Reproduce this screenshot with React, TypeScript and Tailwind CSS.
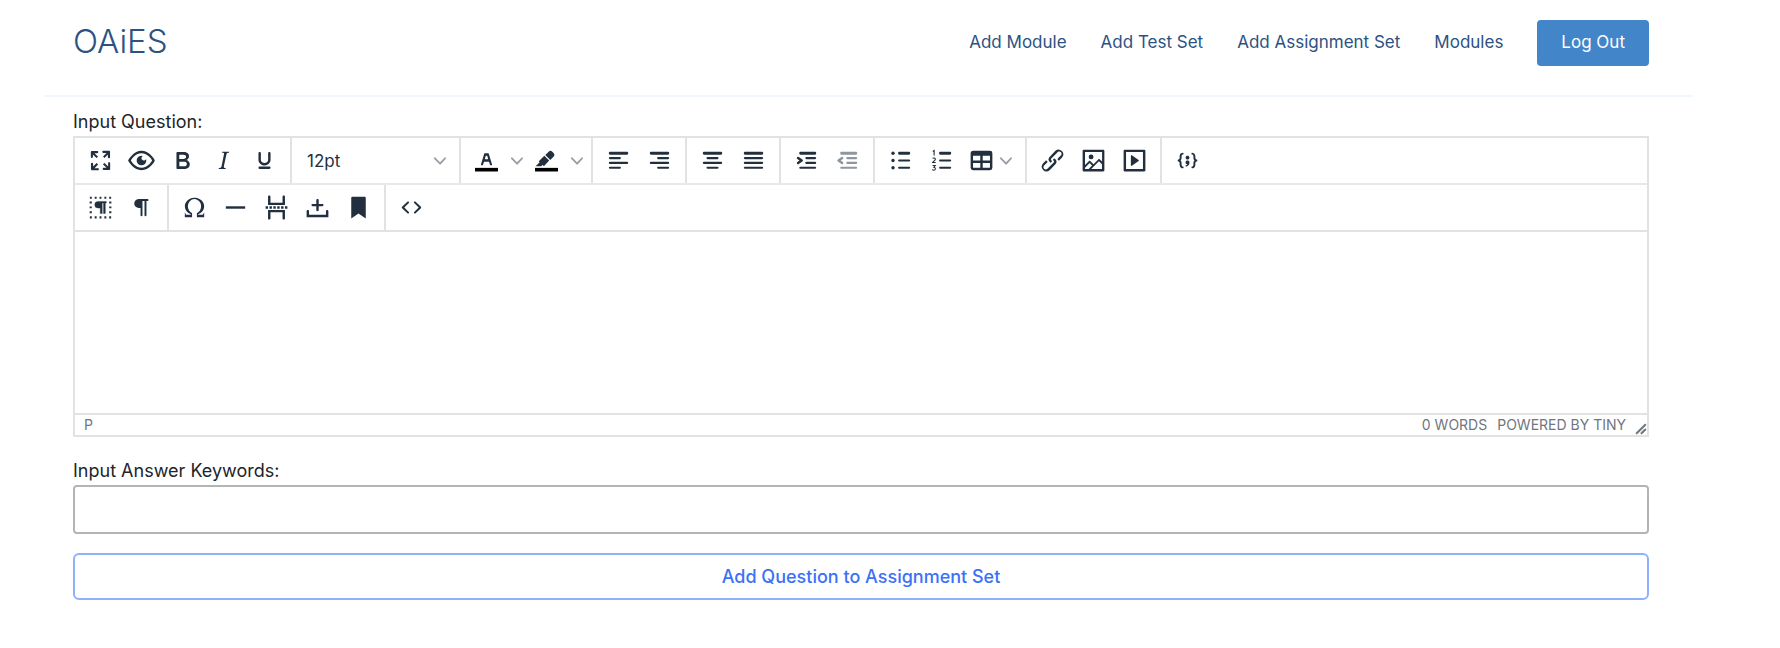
import React from "react";

const ICONS: Record<string, string> = {
  fullscreen:
    "M15.3 10l-1.2-1.3 2.9-3h-2.3a.9.9 0 110-1.7H19c.5 0 .9.4.9.9v4.4a.9.9 0 11-1.8 0V7l-2.8 3zm0 4l3 3v-2.3a.9.9 0 111.7 0V19c0 .5-.4.9-.9.9h-4.4a.9.9 0 110-1.8H17l-3-2.9 1.3-1.2zM10 15.4l-2.9 3h2.3a.9.9 0 110 1.7H5a.9.9 0 01-.9-.9v-4.4a.9.9 0 111.8 0V17l2.9-3 1.2 1.4zM8.7 10L5.7 7v2.3a.9.9 0 01-1.7 0V5c0-.5.4-.9.9-.9h4.4a.9.9 0 010 1.8H7l3 2.9-1.3 1.2z",
  preview:
    "M3.5 12.5c.5.8 1.1 1.6 1.8 2.3 2 2 4.2 3.2 6.7 3.2s4.7-1.2 6.7-3.2a16.2 16.2 0 002.1-2.8 15.7 15.7 0 00-2.1-2.8c-2-2-4.2-3.2-6.7-3.2a9.3 9.3 0 00-6.7 3.2A16.2 16.2 0 003.2 12c0 .2.2.3.3.5zm-2.4-1l.7-1.2L4 7.8C6.2 5.4 8.9 4 12 4c3 0 5.8 1.4 8.1 3.8a18.2 18.2 0 012.8 3.7v1l-.7 1.2a18.1 18.1 0 01-2.1 2.5c-2.3 2.4-5 3.8-8.1 3.8-3 0-5.8-1.4-8.1-3.8a18.2 18.2 0 01-2.8-3.7 1 1 0 010-1zm12-3.3a2 2 0 102.7 2.6 4 4 0 11-2.6-2.6z",
  bold: "M7.8 19c-.3 0-.5 0-.6-.2l-.2-.5V5.7c0-.2 0-.4.2-.5l.6-.2h5c1.5 0 2.7.3 3.5 1 .7.6 1.1 1.4 1.1 2.5a3 3 0 01-.6 1.9c-.4.6-1 1-1.6 1.2.4.1.9.3 1.3.6s.8.7 1 1.2c.4.4.5 1 .5 1.6 0 1.3-.4 2.3-1.3 3-.8.7-2.1 1-3.8 1H7.8zm5-8.3c.6 0 1.2-.1 1.6-.5.4-.3.6-.7.6-1.3 0-1.1-.8-1.7-2.3-1.7H9.3v3.5h3.4zm.5 6c.7 0 1.3-.1 1.7-.4.4-.4.6-.9.6-1.5s-.2-1-.7-1.4c-.4-.3-1-.4-2-.4H9.4v3.8h4z",
  italic:
    "M16.7 4.7l-.1.9h-.3c-.6 0-1 0-1.4.3-.3.3-.4.6-.5 1.1l-2.1 9.8v.6c0 .5.4.8 1.4.8h.2l-.2.8H8l.2-.8h.2c1.1 0 1.8-.5 2-1.5l2-9.8.1-.5c0-.6-.4-.8-1.4-.8h-.3l.2-.9h5.8z",
  underline:
    "M16 5c.6 0 1 .4 1 1v5.5a4 4 0 01-.4 1.8l-1 1.4a5.3 5.3 0 01-5.5 1 5 5 0 01-1.6-1c-.5-.4-.8-.9-1.1-1.4a4 4 0 01-.4-1.8V6c0-.6.4-1 1-1s1 .4 1 1v5.5c0 .3 0 .6.2 1l.6.7a3.3 3.3 0 002.2.8 3.4 3.4 0 002.2-.8c.3-.2.4-.5.6-.8l.2-.9V6c0-.6.4-1 1-1zM8 17h8c.6 0 1 .4 1 1s-.4 1-1 1H8a1 1 0 010-2z",
  link: "M6.2 12.3a1 1 0 011.4 1.4l-2.1 2a2 2 0 102.7 2.8l4.8-4.8a1 1 0 000-1.4 1 1 0 111.4-1.3 2.9 2.9 0 010 4L9.6 20a3.9 3.9 0 01-5.5-5.5l2-2zm11.6-.6a1 1 0 01-1.4-1.4l2-2a2 2 0 10-2.6-2.8L11 10.3a1 1 0 000 1.4A1 1 0 119.6 13a2.9 2.9 0 010-4L14.4 4a3.9 3.9 0 015.5 5.5l-2 2z",
  image:
    "M5 15.7l3.3-3.2c.3-.3.7-.3 1 0L12 15l4.1-4c.3-.4.8-.4 1 0l2 1.9V5H5v10.7zM5 18V19h3l2.8-2.9-2-2L5 17.9zm14-3l-2.5-2.4-6.4 6.5H19v-4zM4 3h16c.6 0 1 .4 1 1v16c0 .6-.4 1-1 1H4a1 1 0 01-1-1V4c0-.6.4-1 1-1zm6 8a2 2 0 100-4 2 2 0 000 4z",
  media:
    "M4 3h16c.6 0 1 .4 1 1v16c0 .6-.4 1-1 1H4a1 1 0 01-1-1V4c0-.6.4-1 1-1zm1 2v14h14V5H5zm4.8 2.6l5.6 4a.5.5 0 010 .8l-5.6 4A.5.5 0 019 16V8a.5.5 0 01.8-.4z",
  table:
    "M19 4a2 2 0 012 2v12a2 2 0 01-2 2H5a2 2 0 01-2-2V6c0-1.1.9-2 2-2h14zM5 14v4h6v-4H5zm14 0h-6v4h6v-4zm0-6h-6v4h6V8zM5 12h6V8H5v4z",
  codeSample:
    "M7.1 10a2.8 2.8 0 01-.8 2 2.8 2.8 0 01.8 2v1.7c0 .3.1.6.4.8.2.3.5.4.8.4.3 0 .4.2.4.4v.8c0 .2-.1.4-.4.4-.7 0-1.4-.3-2-.8-.5-.6-.8-1.3-.8-2V14c0-.3-.1-.6-.4-.8-.2-.3-.5-.4-.8-.4a.4.4 0 01-.4-.4v-.8c0-.2.2-.4.4-.4.3 0 .6-.1.8-.4.3-.2.4-.5.4-.8V8.3c0-.7.3-1.4.8-2 .6-.5 1.3-.8 2-.8.3 0 .4.2.4.4v.8c0 .2-.1.4-.4.4-.3 0-.6.1-.8.4-.3.2-.4.5-.4.8V10zm9.8 0V8.3c0-.3-.1-.6-.4-.8-.2-.3-.5-.4-.8-.4a.4.4 0 01-.4-.4V6c0-.2.1-.4.4-.4.7 0 1.4.3 2 .8.5.6.8 1.3.8 2V10c0 .3.1.6.4.8.2.3.5.4.8.4.2 0 .4.2.4.4v.8c0 .2-.2.4-.4.4-.3 0-.6.1-.8.4-.3.2-.4.5-.4.8v1.7c0 .7-.3 1.4-.8 2-.6.5-1.3.8-2 .8a.4.4 0 01-.4-.4v-.8c0-.2.1-.4.4-.4.3 0 .6-.1.8-.4.3-.2.4-.5.4-.8V14a2.8 2.8 0 01.8-2 2.8 2.8 0 01-.8-2zm-3.3-.4c0 .4-.1.8-.5 1.1-.3.3-.7.5-1.1.5-.4 0-.8-.2-1.1-.5-.4-.3-.5-.7-.5-1.1 0-.5.1-.9.5-1.2.3-.3.7-.4 1.1-.4.4 0 .8.1 1.1.4.4.3.5.7.5 1.2zM12 12c.4 0 .8.1 1.1.5.4.3.5.7.5 1.1 0 1-.1 1.6-.5 2a3 3 0 01-1.1 1c-.4.3-.8.4-1.1.4a.5.5 0 01-.5-.5V16a3 3 0 001-.2l.6-.6c-.6 0-1-.2-1.3-.5-.2-.3-.3-.7-.3-1 0-.5.1-1 .5-1.2.3-.4.7-.5 1.1-.5z",
  sourceCode:
    "M9.8 15.7c.3.3.3.8 0 1-.3.4-.9.4-1.2 0l-4.4-4.1a.8.8 0 010-1.2l4.4-4.2c.3-.3.9-.3 1.2 0 .3.3.3.8 0 1.1L6 12l3.8 3.7zM14.2 15.7c-.3.3-.3.8 0 1 .4.4.9.4 1.2 0l4.4-4.1c.3-.3.3-.9 0-1.2l-4.4-4.2a.8.8 0 00-1.2 0c-.3.3-.3.8 0 1.1L18 12l-3.8 3.7z",
  omega:
    "M15 18h4l1-2v4h-6v-3.3l1.4-1a6 6 0 001.8-2.9 6.3 6.3 0 00-.1-4.1 5.8 5.8 0 00-3-3.2c-.6-.3-1.3-.5-2.1-.5a5.1 5.1 0 00-3.9 1.8 6.3 6.3 0 00-1.3 6 6.2 6.2 0 001.8 3l1.4.9V20H4v-4l1 2h4v-.5l-2-1L5.4 15A6.5 6.5 0 014 11c0-1 .2-1.9.6-2.7A7 7 0 017.8 5C9.2 4.3 10.5 4 12 4c1.5 0 2.8.3 4.1 1 1.4.7 2.5 1.8 3.3 3.2.4.9.6 1.8.6 2.8a6.3 6.3 0 01-1.4 4l-1.6 1.5-2 1v.5z",
  rule: "M4 11h16v2H4z",
  pageBreak:
    "M3 11h2v2H3zM6.2 11h2v2h-2zM9.4 11h2v2h-2zM12.6 11h2v2h-2zM15.8 11h2v2h-2zM19 11h2v2h-2zM7 3v5h10V3c0-.6.4-1 1-1s1 .4 1 1v7H5V3c0-.6.4-1 1-1s1 .4 1 1zM6 22a1 1 0 01-1-1v-7h14v7c0 .6-.4 1-1 1a1 1 0 01-1-1v-5H7v5c0 .6-.4 1-1 1z",
  nonBreaking:
    "M11 11H8a1 1 0 110-2h3V6c0-.6.4-1 1-1s1 .4 1 1v3h3c.6 0 1 .4 1 1s-.4 1-1 1h-3v3c0 .6-.4 1-1 1a1 1 0 01-1-1v-3zm10 4v5H3v-5c0-.6.4-1 1-1s1 .4 1 1v3h14v-3c0-.6.4-1 1-1s1 .4 1 1z",
  bookmark: "M6 4v17l6-4 6 4V4c0-.6-.4-1-1-1H7a1 1 0 00-1 1z",
  pilcrow:
    "M9.5 5H17a.8.8 0 010 1.6h-.9V18.4a.8.8 0 01-1.6 0V6.6h-1.7V18.4a.8.8 0 01-1.6 0V12.4H9.9A3.7 3.7 0 019.5 5z",
};

function Svg({ children }: { children: React.ReactNode }) {
  return (
    <svg viewBox="0 0 24 24" className="size-[29px] shrink-0" fill="currentColor" fillRule="evenodd" aria-hidden="true">
      {children}
    </svg>
  );
}

/* Rows of text lines: [x, y, width]; the first one is drawn heavier. */
function Lines({ rows }: { rows: number[][] }) {
  return (
    <>
      {rows.map(([x, y, w], i) => (
        <rect key={i} x={x} y={i === 0 ? y - 1.2 : y - 0.9} width={w} height={i === 0 ? 2.4 : 1.8} rx={0.9} />
      ))}
    </>
  );
}

const DRAWN: Record<string, React.ReactNode> = {
  alignLeft: <Lines rows={[[4, 6, 16], [4, 10, 10], [4, 14, 16], [4, 18, 10]]} />,
  alignRight: <Lines rows={[[4, 6, 16], [10, 10, 10], [4, 14, 16], [10, 18, 10]]} />,
  alignCenter: <Lines rows={[[4, 6, 16], [7, 10, 10], [4, 14, 16], [7, 18, 10]]} />,
  justify: <Lines rows={[[4, 6, 16], [4, 10, 16], [4, 14, 16], [4, 18, 16]]} />,
  indent: (
    <>
      <Lines rows={[[6, 6, 14], [11, 10, 9], [11, 14, 9], [6, 18, 14]]} />
      <path d="M4.4 13.2L6.2 12l-1.8-1.2a1 1 0 011.2-1.6l3 2a1 1 0 010 1.6l-3 2a1 1 0 11-1.2-1.6z" />
    </>
  ),
  outdent: (
    <>
      <Lines rows={[[6, 6, 14], [11, 10, 9], [11, 14, 9], [6, 18, 14]]} />
      <path d="M8.2 13.2a1 1 0 01-1.2 1.6l-3-2a1 1 0 010-1.6l3-2a1 1 0 011.2 1.6L6.4 12l1.8 1.2z" />
    </>
  ),
  bullets: (
    <>
      <Lines rows={[[10, 6, 10], [10, 12, 10], [10, 18, 10]]} />
      <circle cx="5.8" cy="6" r="1.4" />
      <circle cx="5.8" cy="12" r="1.4" />
      <circle cx="5.8" cy="18" r="1.4" />
    </>
  ),
  numbers: (
    <>
      <Lines rows={[[10, 6, 10], [10, 12, 10], [10, 18, 10]]} />
      <g fill="none" stroke="currentColor" strokeWidth="0.9">
        <path d="M4.8 4.6l1.1-.8v4" />
        <path d="M4.6 10.4c.4-.8 2.4-.7 2.3.5 0 .8-1.3 1.4-2.2 2.7h2.5" />
        <path d="M4.6 16.2h2.2l-1.1 1.4c1.7 0 1.6 2.5-.1 2.5-.6 0-1-.2-1.2-.6" />
      </g>
    </>
  ),
  textColor: (
    <>
      <path d="M2.5 18.1h19v3h-19z" fill="#000" />
      <path d="M8.7 16h-.8a.5.5 0 01-.5-.6l2.7-9c.1-.3.3-.4.5-.4h2.8c.2 0 .4.1.5.4l2.7 9a.5.5 0 01-.5.6h-.8a.5.5 0 01-.4-.4l-.7-2.2c0-.3-.3-.4-.5-.4h-3.4c-.2 0-.4.1-.5.4l-.7 2.2c0 .3-.2.4-.4.4zm2.6-7.6l-.6 2a.5.5 0 00.5.6h1.6a.5.5 0 00.5-.6l-.6-2c0-.3-.3-.4-.5-.4h-.4c-.2 0-.4.1-.5.4z" />
    </>
  ),
  highlight: (
    <>
      <path d="M2.5 18.1h19v3h-19z" fill="#000" />
      <path d="M7.7 16.7H3l3.3-3.3-.7-.8L10.2 8l4 4.1-4 4.2c-.2.2-.6.2-.8 0l-.6-.7-1.1 1.1zm5-7.5L11 7.4l3-2.9a2 2 0 012.6 0L18 6c.7.7.7 2 0 2.7l-2.9 2.9-1.8-1.8-.5-.6" />
    </>
  ),
  blocks: (
    <>
      <path d="M3.2 3.9H21M3.2 20.1H21" fill="none" stroke="currentColor" strokeWidth="1.8" strokeDasharray="1.6 2.4" />
      <path d="M3.9 7.1V18M20.1 7.1V18" fill="none" stroke="currentColor" strokeWidth="1.8" strokeDasharray="1.6 2.4" />
      <path d="M10 7h6.8v1.3h-.8V17h-1.5V8.3h-1.1V17h-1.6v-4.5H10A2.75 2.75 0 0110 7z" stroke="currentColor" strokeWidth="0.3" />
    </>
  ),
};

function Icon({ name }: { name: string }) {
  return <Svg>{DRAWN[name] ?? <path d={ICONS[name]} />}</Svg>;
}

function Chevron() {
  return (
    <svg viewBox="0 0 10 10" className="size-3 shrink-0 text-[#9a9ea6]" fill="currentColor" aria-hidden="true">
      <path d="M8.7 2.2c.3-.3.8-.3 1 0 .4.4.4.9 0 1.2L5.7 7.8c-.3.3-.9.3-1.2 0L.2 3.4a.8.8 0 010-1.2c.3-.3.8-.3 1.1 0L5 6l3.7-3.8z" />
    </svg>
  );
}

function Tool({ name, label, disabled }: { name: string; label: string; disabled?: boolean }) {
  return (
    <button
      type="button"
      aria-label={label}
      disabled={disabled}
      className="flex h-10 w-[41px] items-center justify-center disabled:opacity-50"
    >
      <Icon name={name} />
    </button>
  );
}

function SplitTool({ name, label }: { name: string; label: string }) {
  return (
    <div className="flex">
      <Tool name={name} label={label} />
      <button type="button" aria-label={`${label} options`} className="flex w-[19px] items-center justify-center">
        <Chevron />
      </button>
    </div>
  );
}

function Group({ children, last }: { children: React.ReactNode; last?: boolean }) {
  return (
    <div className={last ? "flex items-center px-[5px]" : "flex items-center border-r-2 border-[#e2e2e2] px-[5px]"}>
      {children}
    </div>
  );
}

const NAV = ["Add Module", "Add Test Set", "Add Assignment Set", "Modules"];

export default function App() {
  return (
    <div className="bg-white pr-[87px] pl-11 font-['Inter',sans-serif]">
      <header className="flex items-start justify-between border-b-2 border-[#f0f6fc] pt-5 pr-11 pb-[29px] pl-[29px] text-[#2c5282]">
        <a href="#" className="text-[33px] leading-[42px] font-light">
          OAiES
        </a>
        <nav className="flex items-center gap-[34px] text-[17px]">
          {NAV.map((item) => (
            <a key={item} href="#">
              {item}
            </a>
          ))}
          <button type="button" className="h-[46px] rounded bg-[#4285c8] px-6 text-white">
            Log Out
          </button>
        </nav>
      </header>

      <main className="flex flex-col pt-[11px] pr-11 pl-[29px] text-lg leading-7 text-[#212529]">
        <label htmlFor="question">Input Question:</label>
        <div className="border-2 border-[#e2e2e2] text-[#222f3e]">
          <div className="flex h-[47px] border-b-2 border-[#e8e8e8]">
            <Group>
              <Tool name="fullscreen" label="Fullscreen" />
              <Tool name="preview" label="Preview" />
              <Tool name="bold" label="Bold" />
              <Tool name="italic" label="Italic" />
              <Tool name="underline" label="Underline" />
            </Group>
            <Group>
              <div className="grid w-[157px] items-center">
                <select
                  aria-label="Font size"
                  defaultValue="12pt"
                  className="col-start-1 row-start-1 h-10 w-full appearance-none bg-transparent px-[10px] text-[17px]"
                >
                  <option>12pt</option>
                </select>
                <span className="pointer-events-none col-start-1 row-start-1 mr-2 justify-self-end">
                  <Chevron />
                </span>
              </div>
            </Group>
            <Group>
              <SplitTool name="textColor" label="Text color" />
              <SplitTool name="highlight" label="Highlight color" />
            </Group>
            <Group>
              <Tool name="alignLeft" label="Align left" />
              <Tool name="alignRight" label="Align right" />
            </Group>
            <Group>
              <Tool name="alignCenter" label="Align center" />
              <Tool name="justify" label="Justify" />
            </Group>
            <Group>
              <Tool name="indent" label="Increase indent" />
              <Tool name="outdent" label="Decrease indent" disabled />
            </Group>
            <Group>
              <Tool name="bullets" label="Bullet list" />
              <Tool name="numbers" label="Numbered list" />
              <button type="button" aria-label="Table" className="flex h-10 w-[58px] items-center gap-1 pl-[5px]">
                <Icon name="table" />
                <Chevron />
              </button>
            </Group>
            <Group>
              <Tool name="link" label="Insert link" />
              <Tool name="image" label="Insert image" />
              <Tool name="media" label="Insert media" />
            </Group>
            <Group last>
              <Tool name="codeSample" label="Code sample" />
            </Group>
          </div>
          <div className="flex h-[47px] border-b-2 border-[#e2e2e2]">
            <Group>
              <Tool name="blocks" label="Show blocks" />
              <Tool name="pilcrow" label="Show invisible characters" />
            </Group>
            <Group>
              <Tool name="omega" label="Special character" />
              <Tool name="rule" label="Horizontal line" />
              <Tool name="pageBreak" label="Page break" />
              <Tool name="nonBreaking" label="Nonbreaking space" />
              <Tool name="bookmark" label="Anchor" />
            </Group>
            <Group last>
              <Tool name="sourceCode" label="Source code" />
            </Group>
          </div>
          <textarea id="question" className="block h-[181px] w-full resize-none p-3 outline-none" />
          <div className="flex h-[22px] items-center border-t-2 border-[#e2e2e2] pl-[9px] text-sm text-[#6f767e]">
            <span className="flex-1">P</span>
            <span>0 WORDS</span>
            <a href="#" className="mr-[9px] ml-[10px]">
              POWERED BY TINY
            </a>
            <svg viewBox="0 0 10 10" className="size-3 self-end" fill="currentColor" aria-hidden="true">
              <path d="M8.1 1.1A.5.5 0 119 2l-7 7A.5.5 0 111 8l7-7zM8.1 5.1A.5.5 0 119 6l-3 3A.5.5 0 115 8l3-3z" stroke="currentColor" strokeWidth="0.5" />
            </svg>
          </div>
        </div>

        <label htmlFor="keywords" className="mt-5">
          Input Answer Keywords:
        </label>
        <input
          id="keywords"
          type="text"
          className="h-[49px] rounded border-2 border-[#b4b4b4] px-3 outline-none"
        />
        <button
          type="button"
          className="mt-[19px] h-[47px] rounded-md border-2 border-[#8fb1fb] font-medium text-[#3b71f7]"
        >
          Add Question to Assignment Set
        </button>
      </main>
    </div>
  );
}
